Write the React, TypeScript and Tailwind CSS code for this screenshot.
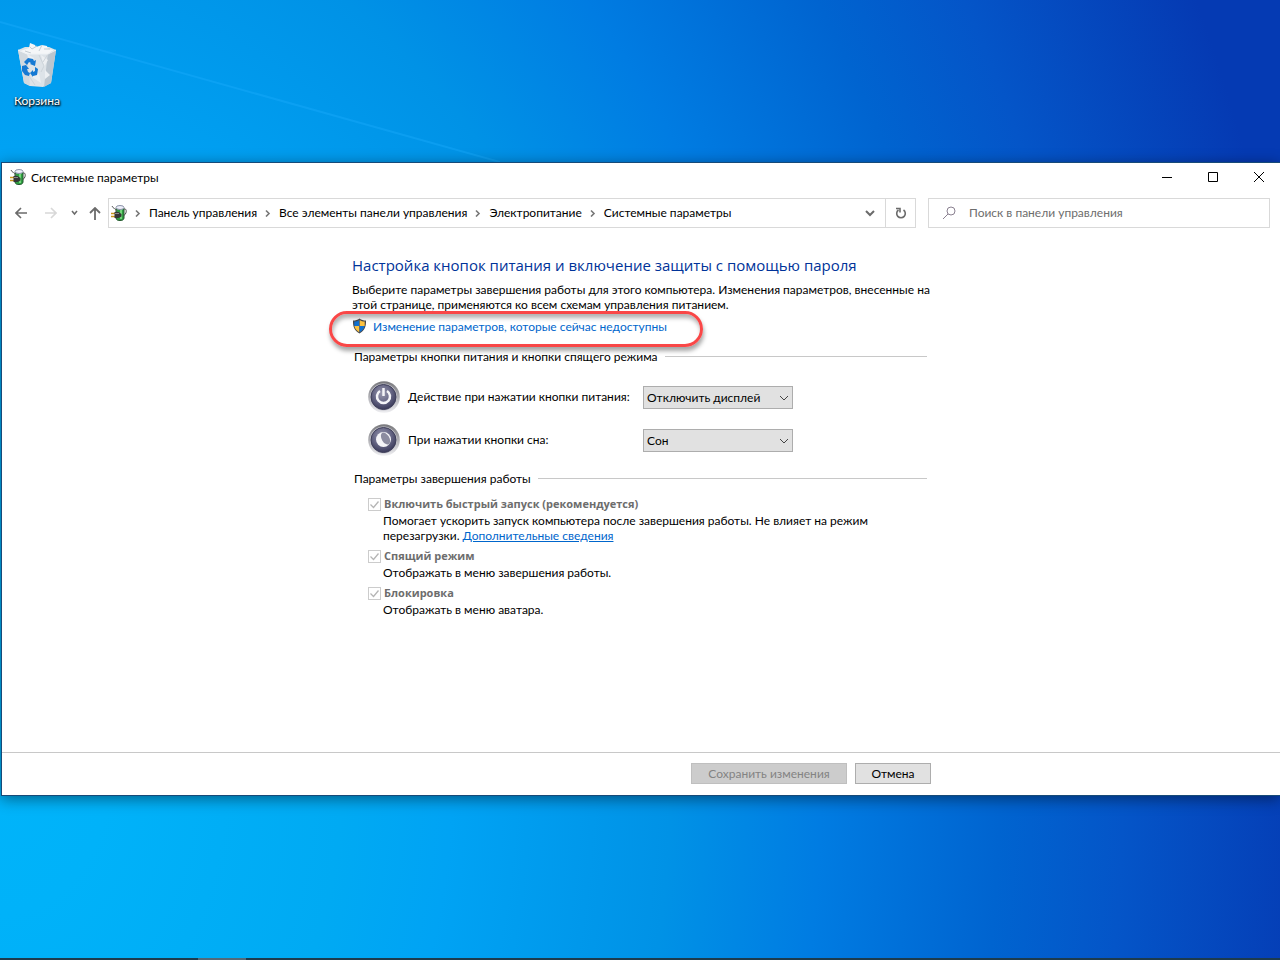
import React from "react";

const breadcrumbs = [
  "Панель управления",
  "Все элементы панели управления",
  "Электропитание",
  "Системные параметры",
];

const shutdownOptions = [
  {
    id: "fast-startup",
    title: "Включить быстрый запуск (рекомендуется)",
    description:
      "Помогает ускорить запуск компьютера после завершения работы. Не влияет на режим перезагрузки.",
    link: "Дополнительные сведения",
  },
  {
    id: "sleep",
    title: "Спящий режим",
    description: "Отображать в меню завершения работы.",
  },
  {
    id: "lock",
    title: "Блокировка",
    description: "Отображать в меню аватара.",
  },
];

const RecycleBinIcon = () => (
  <svg width="40" height="46" viewBox="0 0 40 46">
    <path d="M1 8 8 5 32 5 39 8 34 41 26 45 13 44 7 41Z" fill="#dde3e8" />
    <path d="M1 8 10 10 13 44 7 41Z" fill="#d2d9df" />
    <path d="M39 8 31 10 27 45 34 41Z" fill="#bcc6cf" />
    <path d="M3 9 12 6 13 1 18 3 19 5 25 3 30 4 31 7 37 8 31 12 10 12Z" fill="#f4f6f8" />
    <path d="M12 4 15 7 20 4M22 9 25 3M27 7 33 7M8 9 14 11" stroke="#c3ccd3" fill="none" />
    <path d="M10 12 17 16 14 22ZM24 13 31 18 27 25ZM15 35 22 31 24 41ZM28 28 33 33 28 37Z" fill="#eceff2" />
    <path d="M22 13 27 24 24 30M12 34 18 43M31 12 26 20" stroke="#cdd4da" fill="none" />
    <path d="M1 8 10 12 31 12 39 8" stroke="#eef2f5" fill="none" />
    <g fill="#1679d3">
      <path d="m7 20 4-4 5 1 1 2 2-1-1 6-5-2 1-1-2-1-2 3Z" />
      <path d="m5 24 4-1 3 4-2 0 1 3 2 1-1 3-4-1-3-4Z" />
      <path d="m18 25 3 2-1 6-4 1 0 1-3-4 3-3 0 2 2-1Z" />
    </g>
  </svg>
);

const PowerPlanIcon = () => (
  <svg width="16" height="16" viewBox="0 0 16 16" className="shrink-0">
    <path d="M5 3.500h8V13c0 3.500-8 3.500-8 0Z" fill="#2f9e41" stroke="#23552c" />
    <path d="M9 4.500h2V14H9Z" fill="#74d67a" />
    <ellipse cx="9" cy="2.500" rx="4" ry="2" fill="#eef0fa" stroke="#8c93a8" />
    <path d="M13 4c3.500-1 2.500 6-.5 6.500" stroke="#4a4a4a" fill="none" />
    <path d="M1 1c1 3 4 2 5 5.500" stroke="#5a5a5a" fill="none" />
    <path d="M0 8.500h4M0 11.500h4" stroke="#c8961a" strokeWidth="1.500" />
    <path d="M3.500 7h4l3 2v2.500l-3 1.500h-4Z" fill="#363636" />
    <path d="M4 8.500h4" stroke="#8a8a8a" />
  </svg>
);

const ShieldIcon = () => (
  <svg width="15" height="16" viewBox="0 0 14 16" className="shrink-0">
    <path d="M7 .5C5 2 3 2.500.5 2.500.3 8 1.500 12.500 7 15.500 12.500 12.500 13.700 8 13.500 2.500 11 2.500 9 2 7 .5Z" fill="#49494b" />
    <path d="M6.800 2C5.200 3 3.800 3.500 1.800 3.600V8h5Z" fill="#1170cf" />
    <path d="M7.200 2c1.600 1 3 1.500 5 1.600V8h-5Z" fill="#fcc240" />
    <path d="M1.900 8h4.900v6.200C4 12.500 2.500 11 1.900 8Z" fill="#fcc240" />
    <path d="M12.100 8H7.200v6.200C10 12.500 11.500 11 12.100 8Z" fill="#1170cf" />
  </svg>
);

const RoundButtonIcon = ({ type }: { type: "power" | "sleep" }) => (
  <svg width="32" height="32" viewBox="0 0 32 32" className="mt-[2px] shrink-0">
    <defs>
      <linearGradient id={`${type}-ring`} x1="0" y1="0" x2="0" y2="1">
        <stop offset="0" stopColor="#77777b" />
        <stop offset="0.5" stopColor="#b0b0b5" />
        <stop offset="1" stopColor="#efeff2" />
      </linearGradient>
      <radialGradient id={`${type}-face`} cx="0.45" cy="0.35" r="0.65">
        <stop offset="0" stopColor="#9a9ab0" />
        <stop offset="0.5" stopColor="#6c6c8a" />
        <stop offset="1" stopColor="#3a3a5a" />
      </radialGradient>
    </defs>
    <circle cx="16" cy="16" r="15.800" fill={`url(#${type}-ring)`} />
    <circle cx="15.500" cy="16" r="13.500" fill="#c4c4cc" />
    <circle cx="15.500" cy="16" r="12.500" fill={`url(#${type}-face)`} stroke="#3e3e58" />
    {type === "power" ? (
      <g fill="none" stroke="#f4f4f8" strokeWidth="2.500">
        <path d="M12 10a6.500 6.500 0 1 0 7 0" />
        <path d="M15.500 7v8" />
      </g>
    ) : (
      <>
        <circle cx="15.500" cy="15.500" r="7.500" fill="#f4f4f7" />
        <ellipse cx="17.500" cy="14.500" rx="3.800" ry="6.500" transform="rotate(-30 17.500 14.500)" fill="#8c8ca0" />
      </>
    )}
  </svg>
);

const Chevron = ({ className }: { className: string }) => (
  <svg width="10" height="10" viewBox="0 0 10 10" fill="none" stroke="currentColor" className={className}>
    <path d="m1 3 4 4 4-4" />
  </svg>
);

const CrumbArrow = () => (
  <svg width="8" height="8" viewBox="0 0 8 8" fill="none" stroke="#777" strokeWidth="1.600" className="mx-[7px] shrink-0">
    <path d="m2 1.500 3 3-3 3" />
  </svg>
);

const TitleBar = () => (
  <div className="flex h-[28px] items-center">
    <div className="flex flex-1 items-center gap-[5px] pl-2">
      <PowerPlanIcon />
      <h1>Системные параметры</h1>
    </div>
    <div className="-mr-[2px] flex h-full">
      <button aria-label="Свернуть" className="flex w-[46px] items-center justify-center">
        <svg width="10" height="10" stroke="#000"><path d="M0 5.500h10" /></svg>
      </button>
      <button aria-label="Развернуть" className="flex w-[46px] items-center justify-center">
        <svg width="10" height="10" stroke="#000" fill="none"><path d="M.5.5h9v9h-9Z" /></svg>
      </button>
      <button aria-label="Закрыть" className="flex w-[46px] items-center justify-center">
        <svg width="10" height="10" stroke="#000"><path d="m0 0 10 10M10 0 0 10" /></svg>
      </button>
    </div>
  </div>
);

const NavigationBar = () => (
  <div className="mt-[7px] flex h-[30px] items-center pr-[10px]">
    <nav className="flex w-[106px] shrink-0 items-center pl-[13px] text-[#6b6b6b]">
      <button aria-label="Назад">
        <svg width="12" height="12" viewBox="0 0 12 12" fill="none" stroke="currentColor" strokeWidth="1.600">
          <path d="M12 6H1M6 1 1 6l5 5" />
        </svg>
      </button>
      <button aria-label="Вперед" className="ml-[18px] text-[#d8d8d8]" disabled>
        <svg width="12" height="12" viewBox="0 0 12 12" fill="none" stroke="currentColor" strokeWidth="1.600">
          <path d="M0 6h11M6 1l5 5-5 5" />
        </svg>
      </button>
      <button aria-label="Последние расположения" className="ml-[14px]">
        <svg width="7" height="6" viewBox="0 0 7 6" fill="none" stroke="currentColor" strokeWidth="1.500">
          <path d="m1 1 2.500 3L6 1" />
        </svg>
      </button>
      <button aria-label="Вверх" className="ml-[11px]">
        <svg width="12" height="13" viewBox="0 0 12 13" fill="none" stroke="currentColor" strokeWidth="1.800">
          <path d="M6 13V1M1 6l5-5 5 5" />
        </svg>
      </button>
    </nav>
    <div className="flex h-full flex-1 border border-[#d9d9d9]">
      <div className="flex flex-1 items-center pb-px pl-[2px]">
        <PowerPlanIcon />
        {breadcrumbs.map((item) => (
          <React.Fragment key={item}>
            <CrumbArrow />
            <a href="#" className="whitespace-nowrap">
              {item}
            </a>
          </React.Fragment>
        ))}
      </div>
      <button aria-label="Предыдущие расположения" className="flex w-[30px] items-center justify-center text-[#6b6b6b]">
        <Chevron className="stroke-2" />
      </button>
      <button aria-label="Обновить" className="flex w-[30px] items-center justify-center border-l border-[#d9d9d9]">
        <svg width="12" height="12" viewBox="0 0 12 12" fill="none" stroke="#6b6b6b" strokeWidth="1.600">
          <path d="M8.500 3a4.300 4.300 0 1 1-5 0M1 1.500h4v4" />
        </svg>
      </button>
    </div>
    <label className="ml-3 flex h-full w-[342px] items-center border border-[#d9d9d9] pb-px pl-[14px]">
      <svg width="13" height="13" viewBox="0 0 13 13" fill="none" stroke="#8a8090">
        <circle cx="8" cy="5" r="4" />
        <path d="m5 8-5 5" />
      </svg>
      <input
        type="search"
        aria-label="Поиск"
        placeholder="Поиск в панели управления"
        className="ml-[13px] min-w-0 flex-1 outline-none placeholder:text-[#6d6d6d]"
      />
    </label>
  </div>
);

const GroupTitle = ({ children }: { children: React.ReactNode }) => (
  <div className="flex items-center gap-[7px] pr-1 pl-[2px]">
    <h3>{children}</h3>
    <div className="h-px flex-1 bg-[#c8c8c8]"></div>
  </div>
);

const ActionRow = ({ type, label, value }: { type: "power" | "sleep"; label: string; value: string }) => (
  <div className="flex h-[32px] items-center pl-4">
    <RoundButtonIcon type={type} />
    <label htmlFor={type} className="ml-2 w-[235px] whitespace-nowrap">
      {label}
    </label>
    <div className="relative mt-[2px]">
      <select
        id={type}
        className="block h-[23px] w-[150px] appearance-none border border-[#adadad] bg-[#e1e1e1] pl-[3px]">
        <option>{value}</option>
      </select>
      <Chevron className="pointer-events-none absolute top-[7px] right-1 text-[#444]" />
    </div>
  </div>
);

const App: React.FC = () => {
  return (
    <div className="flex min-h-screen flex-col overflow-hidden bg-[radial-gradient(107%_190%_at_0%_80%,#00b4fa_0%,#00b2f9_8%,#00aaf3_25%,#00a3f4_33%,#0092e6_49%,#007ce2_60%,#0064d0_73%,#0455c8_82%,#053ab3_97%)] font-[Lato,'Noto_Sans',sans-serif] text-[12px] leading-[15px] text-black">
      {/* Desktop */}
      <div className="relative h-[162px] pt-[42px]">
        <svg className="absolute top-0 left-0" width="500" height="162" fill="none">
          <path d="M0 22 500 162" stroke="#1fb0ff" strokeWidth="2" opacity="0.35" />
        </svg>
        <a href="#" className="relative flex w-[74px] flex-col items-center gap-[5px] text-white [text-shadow:1px_1px_2px_#000,0_1px_2px_#000]">
          <RecycleBinIcon />
          Корзина
        </a>
      </div>

      {/* Window */}
      <section className="relative ml-px flex h-[634px] flex-col border border-r-0 border-[#174a78] bg-white shadow-[0_3px_14px_rgba(0,0,0,0.45)]">
        <TitleBar />
        <NavigationBar />

        <main className="flex-1 pt-[28px] pl-[350px]">
          <div className="w-[581px]">
            <h2 className="font-['Open_Sans','Noto_Sans',sans-serif] text-[15px] leading-[18px] whitespace-nowrap text-[#003399]">
              Настройка кнопок питания и включение защиты с помощью пароля
            </h2>
            <p className="mt-2">
              Выберите параметры завершения работы для этого компьютера. Изменения параметров, внесенные на этой
              странице, применяются ко всем схемам управления питанием.
            </p>
            <div className="relative mt-[6px] flex h-4 items-center gap-[6px]">
              <ShieldIcon />
              <a href="#" className="text-[#0066cc]">
                Изменение параметров, которые сейчас недоступны
              </a>
              <div className="pointer-events-none absolute -top-[7px] -left-[23px] h-[36px] w-[374px] rounded-full border-3 border-[#f94747] shadow-[1px_4px_4px_rgba(0,0,0,0.35),inset_1px_4px_4px_rgba(0,0,0,0.3)]"></div>
            </div>

            <div className="mt-[15px] pr-[2px]">
              <GroupTitle>Параметры кнопки питания и кнопки спящего режима</GroupTitle>
            </div>
            <div className="mt-4 flex flex-col gap-[11px]">
              <ActionRow type="power" label="Действие при нажатии кнопки питания:" value="Отключить дисплей" />
              <ActionRow type="sleep" label="При нажатии кнопки сна:" value="Сон" />
            </div>

            <div className="mt-4 pr-[2px]">
              <GroupTitle>Параметры завершения работы</GroupTitle>
            </div>
            <div className="mt-[10px] flex flex-col gap-[5px] pl-4">
              {shutdownOptions.map((option) => (
                <div key={option.id}>
                  <div className="relative flex items-center gap-[3px]">
                    <input
                      id={option.id}
                      type="checkbox"
                      defaultChecked
                      disabled
                      className="mt-[2px] h-[13px] w-[13px] appearance-none border border-[#cccccc]"
                    />
                    <svg width="13" height="13" viewBox="0 0 13 13" className="pointer-events-none absolute top-[2px] left-0">
                      <path d="m2.500 6.500 3 3 5-6" fill="none" stroke="#b5b5b5" strokeWidth="1.300" />
                    </svg>
                    <label
                      htmlFor={option.id}
                      className="font-['Open_Sans','Noto_Sans',sans-serif] text-[11px] font-bold text-[#6d6d6d]">
                      {option.title}
                    </label>
                  </div>
                  <p className="mt-[2px] w-[520px] pl-[15px]">
                    {option.description}{" "}
                    {option.link && (
                      <a href="#" className="text-[#0066cc] underline">
                        {option.link}
                      </a>
                    )}
                  </p>
                </div>
              ))}
            </div>
          </div>
        </main>

        <footer className="h-[43px] border-t border-[#c8c8c8] pt-[10px] pl-[350px]">
          <div className="flex w-[579px] justify-end gap-2">
            <button disabled className="h-[21px] w-[156px] border border-[#bfbfbf] bg-[#cccccc] text-[#838383]">
              Сохранить изменения
            </button>
            <button className="h-[21px] w-[76px] border border-[#adadad] bg-[#e1e1e1]">Отмена</button>
          </div>
        </footer>
      </section>

      {/* Taskbar */}
      <div className="mt-auto flex h-[2px] bg-[#1d3b4d] pl-[198px]">
        <div className="w-12 bg-[#536a79]"></div>
      </div>
    </div>
  );
};

export default App;
